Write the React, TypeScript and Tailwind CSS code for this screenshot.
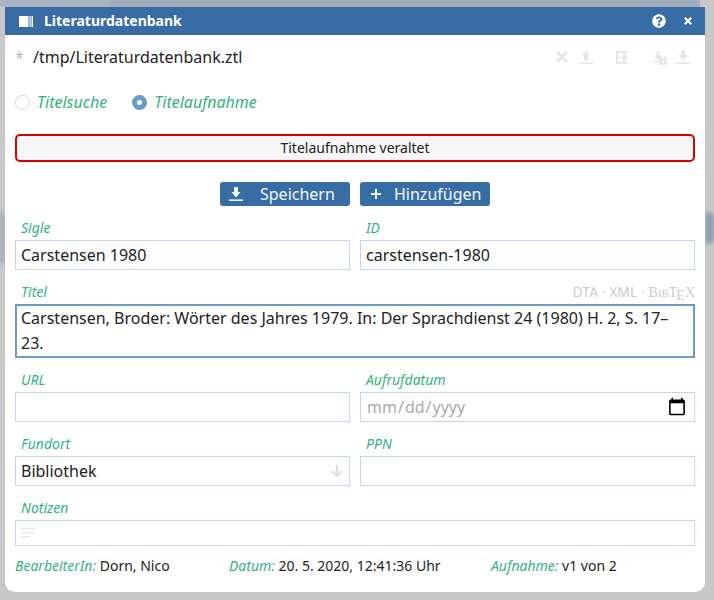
import React from "react";
import { FaQuestionCircle } from "react-icons/fa";

const font = { fontFamily: '"Noto Sans", sans-serif' };

function Cross({ className = "" }: { className?: string }) {
  return (
    <svg viewBox="0 0 12 12" className={className} fill="none" stroke="currentColor" strokeWidth="3">
      <path d="M1.2 1.2 L10.8 10.8 M10.8 1.2 L1.2 10.8" />
    </svg>
  );
}

function Tray({ className = "" }: { className?: string }) {
  return (
    <svg viewBox="0 0 14 14" className={className} fill="currentColor">
      <path d="M7 0 L11.5 5.5 H9 V10.5 H5 V5.5 H2.5 Z" />
      <rect x="0" y="12.4" width="14" height="1.6" />
    </svg>
  );
}

function TrayDown({ className = "" }: { className?: string }) {
  return (
    <svg viewBox="0 0 14 14" className={className} fill="currentColor">
      <path d="M7 10.5 L2.5 5 H5 V0 H9 V5 H11.5 Z" />
      <rect x="0" y="12.4" width="14" height="1.6" />
    </svg>
  );
}

function Label({ children }: { children: React.ReactNode }) {
  return <label className="mt-3 block h-[22px] pl-1.5 text-sm leading-[20px] text-[#33b27f] italic">{children}</label>;
}

const inputCls =
  "block h-[30px] w-full border border-[#c2d7ef] bg-white px-[5px] text-base text-[#222] outline-none";

function Field({ label, value }: { label: string; value: string }) {
  return (
    <div>
      <Label>{label}</Label>
      <input readOnly value={value} className={inputCls} />
    </div>
  );
}

export default function App() {
  return (
    <div className="relative h-[600px] w-[714px] overflow-hidden bg-[#c8c8c8] pt-[7px] pl-[5px]" style={font}>
      {/* blurred page behind the modal */}
      <div className="absolute top-0 left-0 h-[7px] w-[700px] bg-[#9fadbc]" />
      <div className="absolute top-0 left-0 h-[7px] w-[110px] bg-[#aab5c1]" />
      <div className="absolute top-[213px] left-0 h-[50px] w-[5px] bg-[#a0aab8] blur-[2px]" />
      <div className="absolute top-[213px] right-0 h-[30px] w-[9px] bg-[#8c9db2] blur-[2px]" />

      <div className="relative flex h-[585px] w-[700px] flex-col overflow-hidden rounded-b-[10px] bg-white">
        <header className="flex h-7 shrink-0 items-center bg-[#386ca5] pr-[13px] pl-[14px] text-white">
          <svg viewBox="0 0 14 11" className="h-[11px] w-[14px]" fill="currentColor">
            <rect x="0" y="0" width="9.5" height="11" />
            <rect x="10.5" y="0" width="1.2" height="11" />
            <rect x="12.5" y="0" width="1.5" height="11" />
          </svg>
          <span className="ml-[11px] text-sm leading-none font-bold">Literaturdatenbank</span>
          <FaQuestionCircle className="ml-auto text-[14px]" />
          <Cross className="ml-[18px] h-[8px] w-[8px]" />
        </header>

        <div className="flex h-[43px] shrink-0 items-center px-2.5 pt-[1px]">
          <span className="w-[18px] text-base text-[#bbb]">*</span>
          <span className="text-base leading-none text-[#222]">/tmp/Literaturdatenbank.ztl</span>
          <div className="ml-auto flex items-center text-[#e6e6e6]">
            <Cross className="h-3 w-3" />
            <Tray className="ml-[11px] h-[14px] w-[14px]" />
            <svg viewBox="0 0 13 13" className="ml-[23px] h-[13px] w-[13px]" fill="none" stroke="currentColor" strokeWidth="2">
              <path d="M10 3 V1 H1 V12 H10 V10" />
              <path d="M4 6.5 H9 M8 3.5 L11.5 6.5 L8 9.5 Z" fill="currentColor" strokeWidth="1.5" />
            </svg>
            <span className="relative ml-[23px] h-[15px] w-[15px]">
              <TrayDown className="h-[14px] w-[12px]" />
              <span className="absolute right-0 bottom-0 flex h-[8px] w-[8px] items-center justify-center bg-[#e6e6e6] text-[7px] leading-none font-bold text-white">I</span>
            </span>
            <TrayDown className="mr-[5px] ml-[9px] h-[14px] w-[14px]" />
          </div>
        </div>

        <div className="mt-[12px] flex h-[24px] shrink-0 items-center px-2.5 text-base text-[#33b27f] italic">
          <span className="h-[15px] w-[15px] rounded-full border border-[#c2d7ef] bg-white" />
          <span className="ml-[7px]">Titelsuche</span>
          <span className="ml-[25px] flex h-[15px] w-[15px] items-center justify-center rounded-full border-[5px] border-[#6c99cc] bg-white" />
          <span className="ml-[7px]">Titelaufnahme</span>
        </div>

        <div className="mx-2.5 mt-[20px] flex h-[28px] shrink-0 items-center justify-center rounded-[5px] border-2 border-[#d90000] bg-[#f7f7f7] text-sm text-[#222]">
          Titelaufnahme veraltet
        </div>

        <div className="mt-[20px] flex shrink-0 justify-center gap-2.5">
          <button className="flex h-6 w-[130px] items-center rounded-[3px] bg-[#386ca5] pl-[9px] text-base text-[#f4f7fb]">
            <TrayDown className="h-[14px] w-[14px]" />
            <span className="ml-[17px]">Speichern</span>
          </button>
          <button className="flex h-6 w-[130px] items-center rounded-[3px] bg-[#386ca5] pl-[11px] text-base text-[#f4f7fb]">
            <svg viewBox="0 0 10 10" className="h-[10px] w-[10px]" fill="currentColor">
              <rect x="4" y="0" width="2" height="10" />
              <rect x="0" y="4" width="10" height="2" />
            </svg>
            <span className="ml-[13px]">Hinzufügen</span>
          </button>
        </div>

        <div className="grid shrink-0 grid-cols-2 gap-x-2.5 px-2.5">
          <Field label="Sigle" value="Carstensen 1980" />
          <Field label="ID" value="carstensen-1980" />

          <div className="col-span-2">
            <div className="flex items-start justify-between">
              <Label>Titel</Label>
              <span className="mt-3 text-sm leading-[20px] text-[#ccc]">
                DTA · XML ·{" "}
                <span className="[font-family:'Liberation_Serif',serif]">
                  B<span className="text-[11px]">IB</span>T<span className="relative top-[3px] -ml-px">E</span>X
                </span>
              </span>
            </div>
            <textarea
              readOnly
              value="Carstensen, Broder: Wörter des Jahres 1979. In: Der Sprachdienst 24 (1980) H. 2, S. 17–23."
              className="block h-[54px] w-full resize-none overflow-hidden border-2 border-[#6c9cca] bg-white px-1 py-0 text-base leading-[25px] text-[#222] outline-none"
            />
          </div>

          <Field label="URL" value="" />
          <div>
            <Label>Aufrufdatum</Label>
            <input
              type="date"
              className={`${inputCls} text-[#aaa] [&::-webkit-calendar-picker-indicator]:mr-[2px] [&::-webkit-calendar-picker-indicator]:h-[20px] [&::-webkit-calendar-picker-indicator]:w-[20px] [&::-webkit-calendar-picker-indicator]:p-0`}
            />
          </div>

          <div>
            <Label>Fundort</Label>
            <div className="relative">
              <select className={`${inputCls} appearance-none`} defaultValue="Bibliothek">
                <option>Bibliothek</option>
              </select>
              <svg viewBox="0 0 12 12" className="absolute top-[9px] right-[7px] h-3 w-3 text-[#e0e0e0]" fill="none" stroke="currentColor" strokeWidth="2">
                <path d="M6 0 V11 M1 6 L6 11 L11 6" />
              </svg>
            </div>
          </div>
          <Field label="PPN" value="" />

          <div className="col-span-2">
            <Label>Notizen</Label>
            <div className="relative h-[26px] border border-[#c2d7ef] bg-white">
              <svg viewBox="0 0 14 10" className="absolute top-[7px] left-[5px] h-[10px] w-[14px] text-[#e6e6e6]" fill="currentColor">
                <rect x="0" y="0" width="14" height="1.4" />
                <rect x="0" y="4" width="14" height="1.4" />
                <rect x="0" y="8" width="9" height="1.4" />
              </svg>
            </div>
          </div>
        </div>

        <div className="mt-[10px] flex h-5 shrink-0 items-center px-2.5 text-sm leading-none text-[#222]">
          <span className="w-[214px]">
            <i className="text-[#33b27f]">BearbeiterIn:</i> Dorn, Nico
          </span>
          <span className="w-[262px]">
            <i className="text-[#33b27f]">Datum:</i> 20. 5. 2020, 12:41:36 Uhr
          </span>
          <span>
            <i className="text-[#33b27f]">Aufnahme:</i> v1 von 2
          </span>
        </div>
      </div>
    </div>
  );
}
